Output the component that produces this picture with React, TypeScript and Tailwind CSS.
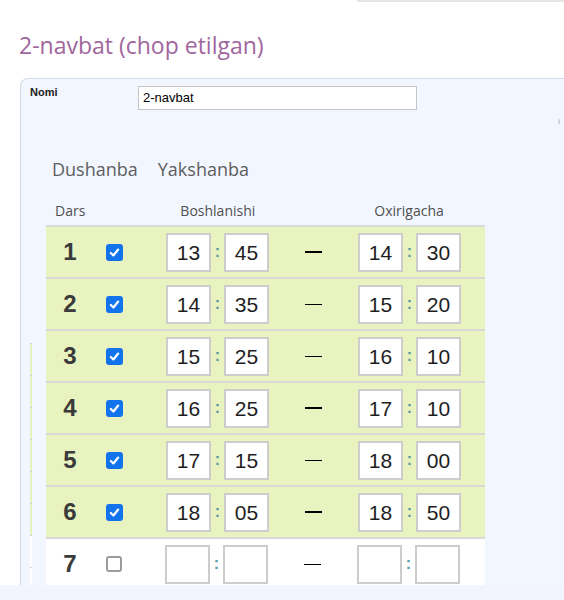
import React from "react";

type Lesson = {
  n: number;
  on: boolean;
  start: [string, string];
  end: [string, string];
  thick: boolean;
};

const lessons: Lesson[] = [
  { n: 1, on: true, start: ["13", "45"], end: ["14", "30"], thick: true },
  { n: 2, on: true, start: ["14", "35"], end: ["15", "20"], thick: false },
  { n: 3, on: true, start: ["15", "25"], end: ["16", "10"], thick: false },
  { n: 4, on: true, start: ["16", "25"], end: ["17", "10"], thick: true },
  { n: 5, on: true, start: ["17", "15"], end: ["18", "00"], thick: false },
  { n: 6, on: true, start: ["18", "05"], end: ["18", "50"], thick: true },
  { n: 7, on: false, start: ["", ""], end: ["", ""], thick: false },
];

function Box({ value }: { value: string }) {
  return (
    <div className="w-[45px] h-[39px] border-2 border-[#cdcdcd] bg-white flex items-center justify-center text-[21px] leading-none text-[#1e1e1e] font-['Liberation_Sans',Arial,sans-serif]">
      {value}
    </div>
  );
}

function Colon() {
  return (
    <div className="w-[13px] flex items-center justify-center text-[16px] leading-none font-bold text-[#5d97a2] font-['Liberation_Sans',Arial,sans-serif]">
      :
    </div>
  );
}

function Check({ on }: { on: boolean }) {
  if (!on) {
    return <div className="w-[16px] h-[16px] rounded-[3px] border-2 border-[#9b9b9b] bg-white" />;
  }
  return (
    <div className="w-[17px] h-[17px] rounded-[3px] bg-[#1174ec] flex items-center justify-center">
      <svg width="11" height="11" viewBox="0 0 12 12">
        <path d="M2 6.5 L4.8 9.2 L10 2.8" fill="none" stroke="white" strokeWidth="2.4" strokeLinecap="round" strokeLinejoin="round" />
      </svg>
    </div>
  );
}

function Row({ l }: { l: Lesson }) {
  return (
    <div
      className={`h-[52px] border-t-2 border-[#d9d9d9] flex items-center ${
        l.on ? "bg-[#e8f3bf]" : "bg-white"
      }`}
    >
      <div className="w-[48px] text-center text-[24px] leading-none font-bold text-[#3a3a3a] font-['Liberation_Sans',Arial,sans-serif]">
        {l.n}
      </div>
      <div className="ml-[12px]">
        <Check on={l.on} />
      </div>
      <div className="ml-[43px] flex">
        <Box value={l.start[0]} />
        <Colon />
        <Box value={l.start[1]} />
      </div>
      <div className="w-[89px] flex justify-center">
        <div className={`w-[17px] bg-black ${l.thick ? "h-[2px]" : "h-[1px]"}`} />
      </div>
      <div className="flex">
        <Box value={l.end[0]} />
        <Colon />
        <Box value={l.end[1]} />
      </div>
    </div>
  );
}

export default function App() {
  return (
    <div className="w-[564px] h-[600px] bg-white overflow-hidden flex flex-col font-['Open_Sans',sans-serif]">
      <div className="ml-[357px] w-[207px] h-[2px] bg-[#e6e6e6] shrink-0" />
      <h1 className="ml-[19px] mt-[32px] text-[23px] leading-none text-[#a0669e] shrink-0">
        2-navbat (chop etilgan)
      </h1>

      <div className="ml-[20px] mt-[21px] flex-1 min-h-0 border-l border-t border-[#d4dae3] rounded-tl-[8px] bg-[#f2f6fe] overflow-hidden flex flex-col">
        <div className="flex items-start pt-[7px]">
          <div className="w-[117px] pl-[9px] mt-[1px] text-[11px] leading-none font-bold text-[#222] font-['Liberation_Sans',Arial,sans-serif]">
            Nomi
          </div>
          <div className="w-[279px] h-[24px] border border-[#c6c6c6] bg-white flex items-center px-[4px] text-[13px] text-black font-['Liberation_Sans',Arial,sans-serif]">
            2-navbat
          </div>
        </div>
        <div className="flex justify-end pr-[4px] mt-[7px] h-[6px] text-[8px] leading-none text-[#8fa0b8]">
          i
        </div>

        <div className="flex gap-[20px] ml-[31px] mt-[37px] text-[18px] leading-none text-[#5e5e5e]">
          <span>Dushanba</span>
          <span>Yakshanba</span>
        </div>

        <div className="flex mt-[26px] ml-[25px] h-[15px] text-[14px] leading-none text-[#505050]">
          <span className="ml-[9px]">Dars</span>
          <span className="ml-[95px]">Boshlanishi</span>
          <span className="ml-[119px]">Oxirigacha</span>
        </div>

        <div className="flex mt-[7px]">
          <div className="w-[25px] shrink-0">
            <div className="ml-[9px] mt-[118px] w-[2px]">
              {[0, 1, 2, 3, 4, 5].map((i) => (
                <div key={i} className="h-[32px] border-t border-[#d2d2d2] bg-[#e6f1bd]" />
              ))}
              {[0, 1].map((i) => (
                <div key={i} className="h-[32px] border-t border-[#d2d2d2] bg-white" />
              ))}
            </div>
          </div>
          <div className="w-[439px] shrink-0">
            {lessons.map((l) => (
              <Row key={l.n} l={l} />
            ))}
          </div>
        </div>
      </div>

      <div className="h-[15px] bg-[#f2f5fd] shrink-0" />
    </div>
  );
}
